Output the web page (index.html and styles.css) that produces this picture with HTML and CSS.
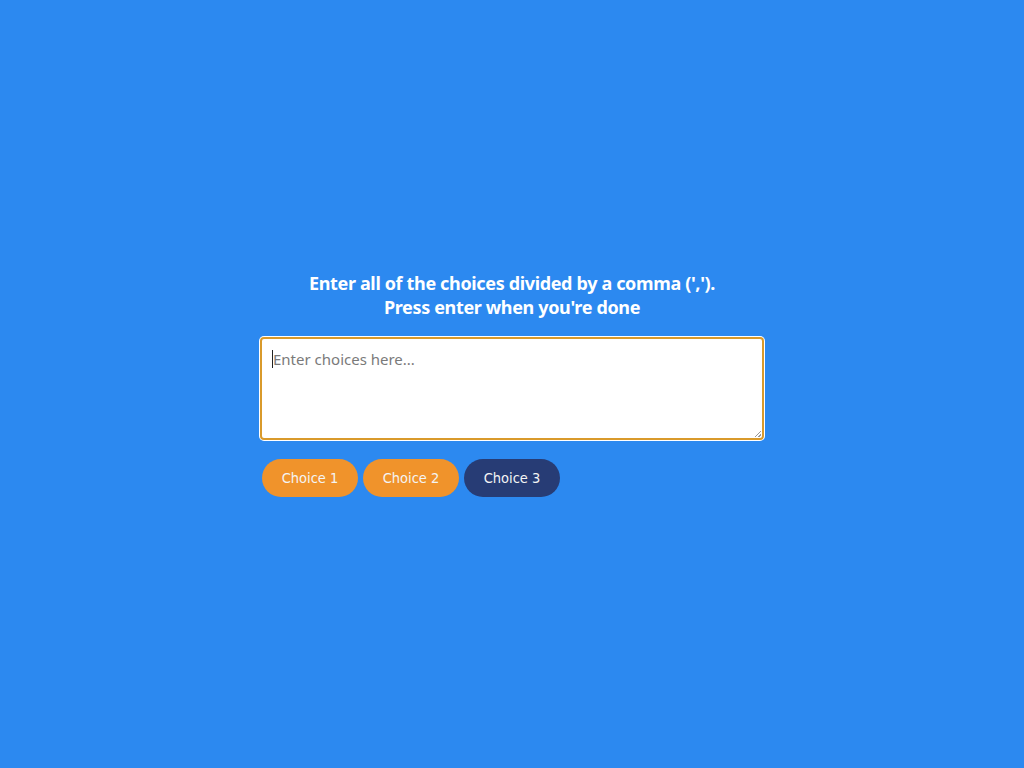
FILE: index.html
```html
<!DOCTYPE html>
<html lang="en">
<head>
<meta charset="utf-8">
<title>Choices</title>
<link rel="stylesheet" href="styles.css">
</head>
<body>
<main class="page">
  <section class="panel">
    <h1 class="title">Enter all of the choices divided by a comma (',').<br>Press enter when you're done</h1>
    <div class="field"><span class="caret"></span><span class="placeholder">Enter choices here...</span><span class="grip"></span></div>
    <div class="choices">
      <span class="chip chip-orange">Choice 1</span>
      <span class="chip chip-orange">Choice 2</span>
      <span class="chip chip-navy">Choice 3</span>
    </div>
  </section>
</main>
</body>
</html>
```

FILE: styles.css
```css
html, body {
  margin: 0;
  padding: 0;
  background: #2c89f0;
}
.page {
  height: 768px;
  box-sizing: border-box;
  padding-top: 271px;
  display: flex;
  justify-content: center;
  align-items: flex-start;
}
.panel {
  width: 504px;
  display: flex;
  flex-direction: column;
}
.title {
  margin: 0 0 18px;
  text-align: center;
  color: #ffffff;
  font-family: "Noto Sans", sans-serif;
  font-weight: 700;
  font-size: 18px;
  line-height: 24px;
  letter-spacing: -0.35px;
}
.field {
  position: relative;
  background: #ffffff;
  border: 2px solid #d99a2b;
  border-radius: 4px;
  box-shadow: 0 0 0 1px #ffffff;
  padding: 10px 10px 0;
  box-sizing: content-box;
  height: 89px;
  display: flex;
  align-items: flex-start;
  font-family: "Noto Sans", sans-serif;
  font-size: 15px;
  line-height: 20px;
}
.caret {
  width: 1px;
  height: 18px;
  margin-top: 1px;
  background: #222;
}
.placeholder {
  color: #7a7a7a;
}
.grip {
  position: absolute;
  right: 1px;
  bottom: 1px;
  width: 6px;
  height: 6px;
  background: linear-gradient(135deg, transparent 45%, #999 45%, #999 55%, transparent 55%, transparent 75%, #999 75%, #999 85%, transparent 85%);
}
.choices {
  display: flex;
  gap: 5px;
  margin-top: 19px;
  padding-left: 2px;
}
.chip {
  width: 96px;
  height: 38px;
  border-radius: 19px;
  display: flex;
  align-items: center;
  justify-content: center;
  font-family: "DejaVu Sans Condensed", "DejaVu Sans", sans-serif;
  font-size: 14.5px;
  color: #f4f4f4;
}
.chip-orange {
  background: #f0932b;
}
.chip-navy {
  background: #273c75;
}
```
